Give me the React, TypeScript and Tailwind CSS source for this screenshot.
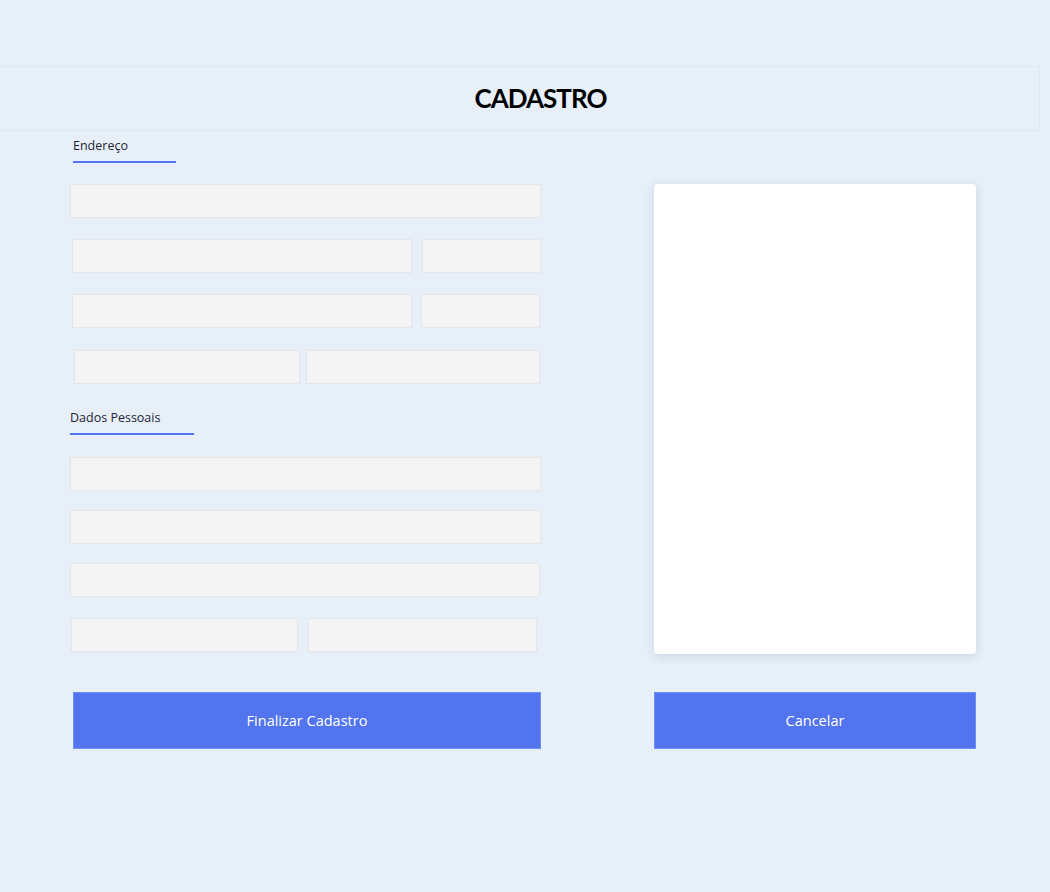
const field = "h-[34px] bg-[#f4f4f4] border border-[#e6e6e6] shadow-[0_0_1px_rgba(0,0,0,0.06)]";

function SectionTitle({ label, line }: { label: string; line: string }) {
  return (
    <div className="flex flex-col items-start">
      <span className="text-[12.5px] leading-[18px] text-[#1f2433]">{label}</span>
      <div className={`mt-[6px] h-[2px] bg-[#5073f0] ${line}`} />
    </div>
  );
}

export default function App() {
  return (
    <main
      className="min-h-[892px] w-[1050px] bg-[#e7eff8] overflow-hidden"
      style={{ fontFamily: '"Open Sans", "Liberation Sans", sans-serif' }}
    >
      <header className="mt-[66px] h-[65px] w-[1040px] border border-l-0 border-[#dfe7f0] flex items-center justify-center">
        <h1
          className="ml-[42px] text-[26px] font-bold tracking-[-1px] text-black"
          style={{ fontFamily: 'Lato, "Liberation Sans", sans-serif' }}
        >
          CADASTRO
        </h1>
      </header>

      <div className="flex">
        {/* form */}
        <section className="ml-[70px] w-[471px] flex flex-col">
          <div className="ml-[3px] mt-[6px]">
            <SectionTitle label="Endereço" line="w-[103px]" />
          </div>
          <div className={`mt-[21px] ${field}`} />
          <div className="mt-[21px] flex gap-[10px] pl-[2px]">
            <div className={`w-[340px] ${field}`} />
            <div className={`w-[119px] ${field}`} />
          </div>
          <div className="mt-[21px] flex gap-[9px] pl-[2px]">
            <div className={`w-[340px] ${field}`} />
            <div className={`w-[119px] ${field}`} />
          </div>
          <div className="mt-[22px] flex gap-[6px] pl-[4px]">
            <div className={`w-[226px] ${field}`} />
            <div className={`w-[234px] ${field}`} />
          </div>

          <div className="mt-[25px]">
            <SectionTitle label="Dados Pessoais" line="w-[124px]" />
          </div>
          <div className={`mt-[22px] ${field}`} />
          <div className={`mt-[19px] ${field}`} />
          <div className={`mt-[19px] w-[470px] ${field}`} />
          <div className="mt-[21px] flex gap-[10px] pl-[1px]">
            <div className={`w-[227px] ${field}`} />
            <div className={`w-[229px] ${field}`} />
          </div>

          <button className="mt-[40px] ml-[3px] h-[57px] w-[468px] bg-[#5275ef] border border-[#6f8ff5] text-white text-[14.5px]">
            Finalizar Cadastro
          </button>
        </section>

        {/* preview */}
        <aside className="ml-[113px] w-[322px] flex flex-col">
          <div className="mt-[53px] h-[470px] bg-white rounded-[4px] shadow-[0_2px_10px_rgba(60,90,130,0.18)]" />
          <button className="mt-[38px] h-[57px] w-full bg-[#5275ef] border border-[#6f8ff5] text-white text-[14.5px]">
            Cancelar
          </button>
        </aside>
      </div>
    </main>
  );
}
